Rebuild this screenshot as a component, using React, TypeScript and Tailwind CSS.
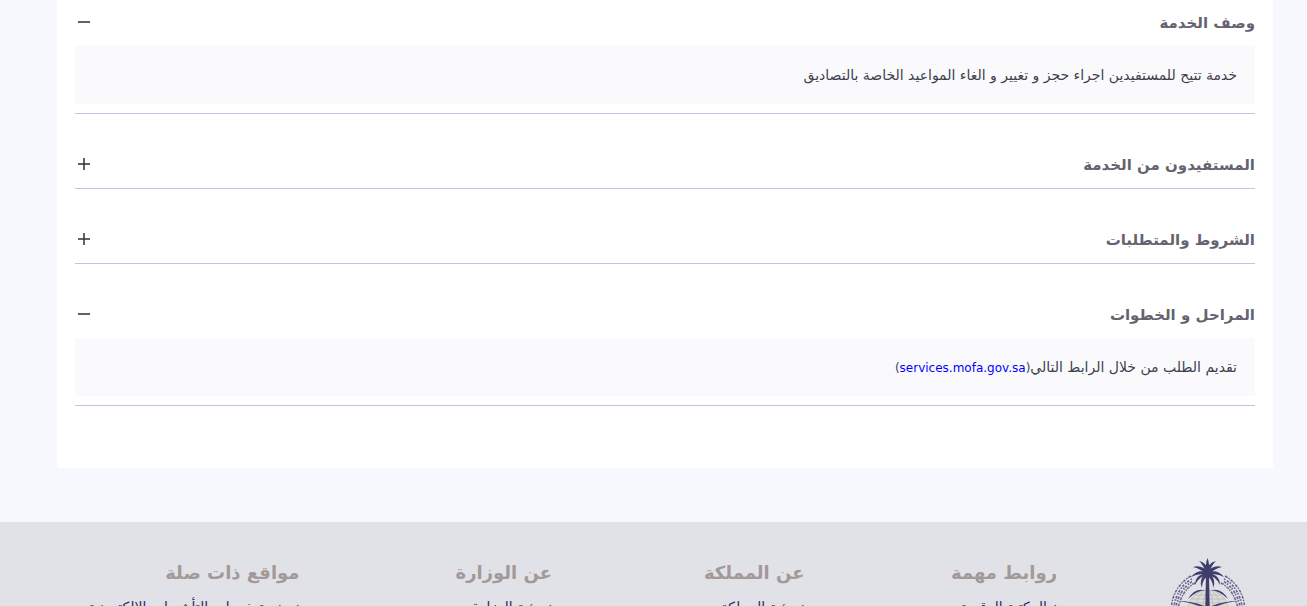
import { useState } from "react";
import type { ReactNode } from "react";

type SectionProps = { title: string; initiallyOpen?: boolean; children: ReactNode };

function Section({ title, initiallyOpen = false, children }: SectionProps) {
  const [open, setOpen] = useState(initiallyOpen);
  return (
    <section className="border-b border-[#c5c3df]">
      <h2 className="pb-[7px]">
        <button
          type="button"
          aria-expanded={open}
          onClick={() => setOpen(!open)}
          className="flex h-8 w-full items-center justify-between text-[15px] font-bold text-[#65636f]"
        >
          <span>{title}</span>
          <svg viewBox="0 0 18 18" className="size-[18px]" aria-hidden="true">
            <path d="M3 7h12v2H3z" fill="#626262" />
            {!open && <path d="M8 2h2v12H8z" fill="#333" fillOpacity="0.76" />}
          </svg>
        </button>
      </h2>
      {open && (
        <div className="mb-[9px] bg-[#fafafc] px-[18px] py-5 text-sm leading-[18px] text-[#3d3f4c]">
          {children}
        </div>
      )}
    </section>
  );
}

const columns = [
  { title: "روابط مهمة", link: "المكتبة الرقمية" },
  { title: "عن المملكة", link: "رؤية المملكة" },
  { title: "عن الوزارة", link: "رؤية الوزارة" },
  { title: "مواقع ذات صلة", link: "منصة خدمات التأشيرات الالكترونية" },
];

function Emblem() {
  return (
    <svg viewBox="0 0 80 90" className="h-[90px] w-20" role="img" aria-label="وزارة الخارجية">
      <g fill="none" stroke="#66648f">
        <g strokeWidth="1.5" strokeDasharray="3 1 1.5 1.2">
          <path d="M23 19Q4 30 3 54" />
          <path d="M57 19Q76 30 77 54" />
          <path d="M27 26Q13 33 9 56" />
          <path d="M53 26Q67 33 71 56" />
        </g>
        <g strokeWidth="1.7" strokeDasharray="1.5 1.7 2.5 1">
          <path d="M24 22Q8 30 5 55" />
          <path d="M56 22Q72 30 75 55" />
          <path d="M25 24Q10 33 7 55" strokeDashoffset="2" />
          <path d="M55 24Q70 33 73 55" strokeDashoffset="2" />
        </g>
      </g>
      <circle cx="40" cy="53" r="20" fill="#dcdbd9" />
      <g fill="none" stroke="#b3b2b4" strokeWidth="0.6">
        <circle cx="40" cy="53" r="20" />
        <ellipse cx="40" cy="53" rx="12" ry="20" />
        <ellipse cx="40" cy="53" rx="5" ry="20" />
        <path d="M27 38h26M23 42h34M21 46h38M20 50h40" />
      </g>
      <g fill="#3f3d6c">
        <path d="M20 42Q26 31 37 33Q28 34 20 42zM60 42Q54 31 43 33Q52 34 60 42z" />
        <path d="M38 17h3l1 46h-5z" />
        <path d="M38 18Q37 7 39.500 1Q42 7 41 18z" />
        <path d="M38 18Q36 8 31 4Q39 5 41 17zM41 18Q43 8 48 4Q40 5 38 17z" />
        <path d="M39 19Q34 12 25 10Q34 7 41 16zM40 19Q45 12 54 10Q45 7 38 16z" />
        <path d="M40 19Q32 15 23 20Q30 11 41 16zM39 19Q47 15 56 20Q49 11 38 16z" />
        <path d="M40 18Q31 19 27 28Q27 17 40 16zM39 18Q48 19 52 28Q52 17 39 16z" />
        <path d="M41 18Q34 22 34 31Q30 23 38 16zM38 18Q45 22 45 31Q49 23 41 16z" />
        <path d="M10 44Q34 44 57 60L54 63Q34 46 10 44zM70 44Q46 44 23 60L26 63Q46 46 70 44z" />
      </g>
    </svg>
  );
}

export default function App() {
  return (
    <div
      dir="rtl"
      className="h-screen overflow-hidden bg-[#f6f8fd] font-['DejaVu_Sans',sans-serif]"
    >
      <main className="ms-[34px] me-[57px] bg-white px-[18px] pt-[7px] pb-[62px]">
        <div className="flex flex-col gap-[35px]">
          <Section title="وصف الخدمة" initiallyOpen>
            <p>خدمة تتيح للمستفيدين اجراء حجز و تغيير و الغاء المواعيد الخاصة بالتصاديق</p>
          </Section>
          <Section title="المستفيدون من الخدمة">
            <p>المستفيدون من الخدمة</p>
          </Section>
          <Section title="الشروط والمتطلبات">
            <p>الشروط والمتطلبات</p>
          </Section>
          <Section title="المراحل و الخطوات" initiallyOpen>
            <p>
              تقديم الطلب من خلال الرابط التالي
              <span className="text-xs leading-none">
                (
                <a href="https://services.mofa.gov.sa" className="text-[#0000ff]">
                  services.mofa.gov.sa
                </a>
                )
              </span>
            </p>
          </Section>
        </div>
      </main>
      <footer className="mt-[54px] flex bg-[#e1e2e8] ps-[59px] pe-[47px] pt-[35px]">
        <Emblem />
        <div className="ms-[111px] grid flex-1 grid-cols-4">
          {columns.map((column) => (
            <nav key={column.title} aria-label={column.title}>
              <h3 className="text-lg leading-8 font-bold text-[#a29998]">{column.title}</h3>
              <a href="#" className="mt-1.5 block text-sm leading-6 whitespace-nowrap text-[#302d5b]">
                <span aria-hidden="true">› </span>
                {column.link}
              </a>
            </nav>
          ))}
        </div>
      </footer>
    </div>
  );
}
